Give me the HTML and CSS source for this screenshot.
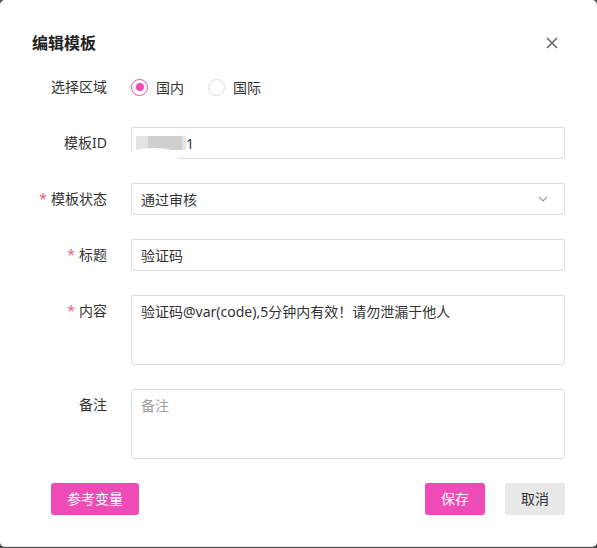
FILE: index.html
```html
<!DOCTYPE html>
<html lang="zh">
<head>
<meta charset="utf-8">
<title>编辑模板</title>
<link rel="stylesheet" href="styles.css">
</head>
<body>
<div class="dialog">
  <div class="header">
    <h2 class="title">编辑模板</h2>
    <button class="close" aria-label="关闭">
      <svg width="12" height="12" viewBox="0 0 12 12"><path d="M1 1L11 11M11 1L1 11" stroke="#666" stroke-width="1.6" fill="none"/></svg>
    </button>
  </div>
  <form class="form">
    <div class="row">
      <label class="label">选择区域</label>
      <div class="control radios">
        <span class="radio checked"><span class="circle"></span>国内</span>
        <span class="radio"><span class="circle"></span>国际</span>
      </div>
    </div>
    <div class="row">
      <label class="label">模板ID</label>
      <div class="control input"><span class="blur"><span class="b1"></span><span class="b2"></span><span class="b3"></span></span>1<span class="smudge"></span></div>
    </div>
    <div class="row">
      <label class="label"><span class="req">*</span>模板状态</label>
      <div class="control input select">通过审核
        <svg class="chev" width="10" height="6" viewBox="0 0 10 6"><path d="M1 1L5 5L9 1" stroke="#999" stroke-width="1.1" fill="none"/></svg>
      </div>
    </div>
    <div class="row">
      <label class="label"><span class="req">*</span>标题</label>
      <div class="control input">验证码</div>
    </div>
    <div class="row">
      <label class="label"><span class="req">*</span>内容</label>
      <div class="control area">验证码@var(code),5分钟内有效！请勿泄漏于他人</div>
    </div>
    <div class="row">
      <label class="label">备注</label>
      <div class="control area placeholder">备注</div>
    </div>
  </form>
  <div class="footer">
    <button class="btn primary">参考变量</button>
    <div class="actions">
      <button class="btn primary">保存</button>
      <button class="btn plain">取消</button>
    </div>
  </div>
</div>
</body>
</html>
```

FILE: styles.css
```css
html, body {
  margin: 0;
  padding: 0;
  background: #4d4d4d;
}
body {
  font-family: "Noto Sans", "Noto Sans CJK SC", sans-serif;
  font-size: 14px;
  color: #333;
}
.dialog {
  width: 597px;
  height: 547px;
  background: #fff;
  border-radius: 5px;
  border-bottom: 1px solid #e2e2e2;
  box-sizing: border-box;
  display: flex;
  flex-direction: column;
}
.header {
  display: flex;
  align-items: center;
  justify-content: space-between;
  padding: 31px 39px 0 32px;
  height: 24px;
  margin-bottom: 16px;
}
.title {
  margin: 0;
  font-size: 16px;
  font-weight: 600;
  line-height: 24px;
  color: #222;
}
.close {
  border: 0;
  background: none;
  padding: 0;
  width: 12px;
  height: 12px;
  display: flex;
}
.form {
  display: flex;
  flex-direction: column;
  gap: 24px;
  padding-right: 32px;
}
.row {
  display: flex;
  align-items: flex-start;
}
.label {
  width: 107px;
  flex: none;
  text-align: right;
  line-height: 32px;
  color: #333;
}
.req {
  color: #ec5f7e;
  margin-right: 4px;
}
.control {
  margin-left: 24px;
  flex: 1;
}
.radios {
  display: flex;
  align-items: center;
  height: 32px;
  gap: 24px;
}
.radio {
  display: flex;
  align-items: center;
  gap: 8px;
  color: #333;
}
.circle {
  width: 17px;
  height: 17px;
  border: 1px solid #dcdcdc;
  border-radius: 50%;
  box-sizing: border-box;
  display: flex;
  align-items: center;
  justify-content: center;
}
.checked .circle {
  border-color: #ee4bb7;
}
.checked .circle::after {
  content: "";
  width: 8px;
  height: 8px;
  border-radius: 50%;
  background: #ee4bb7;
}
.input {
  height: 32px;
  box-sizing: border-box;
  border: 1px solid #dcdcdc;
  border-radius: 3px;
  padding: 0 9px;
  display: flex;
  align-items: center;
  position: relative;
  color: #333;
}
.blur {
  display: flex;
  height: 14px;
  margin-left: -5px;
}
.b1 { width: 12px; background: #e3e3e3; }
.b2 { width: 34px; background: #cfcfcf; }
.b3 { width: 4px; background: #e6e6e6; }
.smudge {
  position: absolute;
  left: -4px;
  bottom: -6px;
  width: 52px;
  height: 16px;
  border-radius: 50%;
  background: rgba(255,255,255,0.95);
}
.select {
  justify-content: space-between;
}
.chev {
  margin-right: 7px;
}
.area {
  height: 70px;
  box-sizing: border-box;
  border: 1px solid #dcdcdc;
  border-radius: 3px;
  padding: 5px 9px;
  line-height: 22px;
  color: #333;
}
.placeholder {
  color: #a0a0a0;
}
.footer {
  display: flex;
  justify-content: space-between;
  padding: 24px 32px 0 51px;
}
.actions {
  display: flex;
  gap: 20px;
}
.btn {
  height: 32px;
  padding: 0 16px;
  border: 0;
  border-radius: 3px;
  font-family: inherit;
  font-size: 14px;
  line-height: 32px;
}
.primary {
  background: #ee4bb7;
  color: #fff;
}
.plain {
  background: #e8e8e8;
  color: #333;
}
```
